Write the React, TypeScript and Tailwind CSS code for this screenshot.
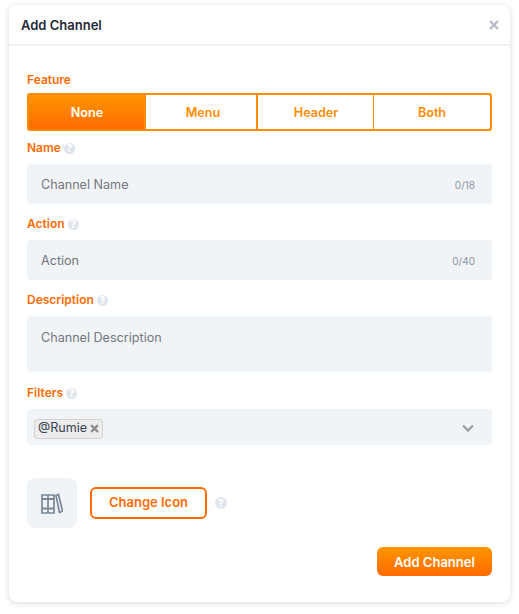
import React from 'react';

const Help = ({ className = '' }: { className?: string }) => (
  <span className={`inline-flex w-[11px] h-[11px] rounded-full bg-[#dfe5ec] text-white text-[10px] font-extrabold leading-none items-center justify-center ${className}`}>?</span>
);

const Label = ({ text, help = true }: { text: string; help?: boolean }) => (
  <div className="flex items-center gap-[3px] h-[14px] text-[12px] leading-[14px] font-semibold text-[#ff6a00]">
    <span>{text}</span>
    {help && <Help />}
  </div>
);

const Field = ({ placeholder, count }: { placeholder: string; count: string }) => (
  <div className="h-10 bg-[#f1f4f7] rounded flex items-center justify-between pl-[14px] pr-[17px] pt-[2px] text-[12.6px] text-[#72767d]">
    <span>{placeholder}</span>
    <span className="text-[10px] text-[#8b93a1]">{count}</span>
  </div>
);

export default function App() {
  const tabs = [
    { name: 'Menu', cls: 'w-[112px] border-l-2 pl-[4px]' },
    { name: 'Header', cls: 'w-[117px] border-l-2 pl-[1px]' },
    { name: 'Both', cls: 'flex-1 border-l' },
  ];

  return (
    <div className="w-[519px] h-[614px] bg-white pt-[5px] pl-[9px] font-['Inter','Liberation_Sans',sans-serif]">
      <div className="w-[501px] h-[597px] bg-white rounded-lg shadow-[0_1px_6px_rgba(15,23,42,0.16)] flex flex-col">
        <div className="h-[41px] shrink-0 border-b-2 border-[#eef1f5] flex items-center justify-between pl-3 pr-[11px]">
          <span className="text-[13px] pt-[2px] font-semibold text-[#1f2937]">Add Channel</span>
          <svg width="10" height="10" viewBox="0 0 10 10" fill="none" stroke="#b4bcc8" strokeWidth="2.4">
            <path d="M1 1l8 8M9 1l-8 8" />
          </svg>
        </div>

        <div className="flex-1 px-[18px] pt-[27px] flex flex-col">
          <Label text="Feature" help={false} />
          <div className="mt-[6px] h-[38px] flex rounded-[3px] border-2 border-[#ff8c00] overflow-hidden">
            <div className="w-[115px] bg-gradient-to-b from-[#ff9500] to-[#ff6a00] text-white text-[12.6px] pt-[2px] pl-[1px] font-semibold flex items-center justify-center">None</div>
            {tabs.map(t => (
              <div key={t.name} className={`${t.cls} border-[#ff8c00] text-[#ff8c00] text-[12.6px] pt-[2px] font-semibold flex items-center justify-center`}>{t.name}</div>
            ))}
          </div>

          <div className="mt-[10px]"><Label text="Name" /></div>
          <div className="mt-[9px]"><Field placeholder="Channel Name" count="0/18" /></div>

          <div className="mt-[13px]"><Label text="Action" /></div>
          <div className="mt-[9px]"><Field placeholder="Action" count="0/40" /></div>

          <div className="mt-[13px]"><Label text="Description" /></div>
          <div className="mt-[9px] h-[56px] bg-[#f1f4f7] rounded pl-[14px] pt-[14px] text-[12.6px] leading-[16px] text-[#72767d]">Channel Description</div>

          <div className="mt-[14px]"><Label text="Filters" /></div>
          <div className="mt-[9px] h-9 bg-[#f1f4f7] rounded flex items-center justify-between pl-[7px] pr-[18px]">
            <div className="mt-[3px] h-5 flex items-center gap-[3px] pl-[3px] pr-[3px] bg-[#ececec] border border-[#d2d2d2] rounded-[3px] text-[12.6px] text-[#374151]">
              <span>@Rumie</span>
              <svg width="9" height="9" viewBox="0 0 8 8" fill="none" stroke="#8d8d8d" strokeWidth="2">
                <path d="M1 1l6 6M7 1L1 7" />
              </svg>
            </div>
            <svg className="mt-[2px]" width="12" height="8" viewBox="0 0 12 8" fill="none" stroke="#9a9ea5" strokeWidth="2.4">
              <path d="M1 1.500l5 5 5-5" />
            </svg>
          </div>

          <div className="mt-[33px] flex items-center">
            <div className="w-[50px] h-[50px] rounded-lg bg-[#f1f4f7] flex items-center justify-center">
              <svg width="22" height="21" viewBox="0 0 22 21" fill="none" stroke="#7a8799" strokeWidth="1.700">
                <path d="M1 2h12v18H1zM7 2v18" />
                <path d="M1 6h12M1 15.500h12" strokeWidth="1.900" />
                <path d="M15 2.500l2.500-1 4 16.500-3 1.500z" />
              </svg>
            </div>
            <button className="ml-[13px] w-[117px] h-8 rounded-md border-2 border-[#ff6a00] text-[#ff6a00] text-[13px] font-semibold flex items-center justify-center">Change Icon</button>
            <Help className="ml-2 !w-3 !h-3" />
          </div>

          <div className="mt-[19px] flex justify-end">
            <button className="w-[115px] h-[29px] rounded-md bg-gradient-to-b from-[#ff9500] to-[#ff6a00] text-white text-[13px] pt-[2px] font-semibold flex items-center justify-center">Add Channel</button>
          </div>
        </div>
      </div>
    </div>
  );
}
